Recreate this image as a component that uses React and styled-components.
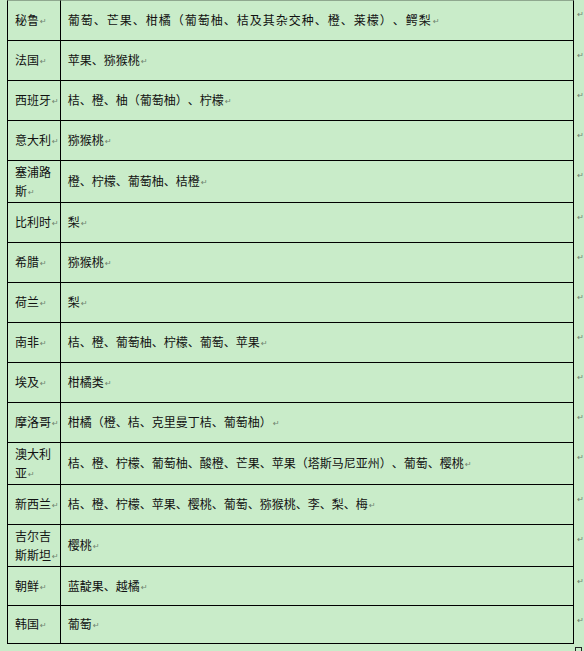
import React from "react";
import styled, { createGlobalStyle } from "styled-components";

const GlobalStyle = createGlobalStyle`
    html, body {
        margin: 0;
        padding: 0;
        background: #c9ecc9;
    }
    body {
        font-family: "Noto Sans CJK SC", "Noto Sans", sans-serif;
        color: #111;
    }
`;

// h = row height incl. bottom border, sp = extra letter spacing
const rows = [
    { country: ["秘鲁"], fruits: "葡萄、芒果、柑橘（葡萄柚、桔及其杂交种、橙、莱檬）、鳄梨", h: 40, sp: 1 },
    { country: ["法国"], fruits: "苹果、猕猴桃", h: 40 },
    { country: ["西班牙"], fruits: "桔、橙、柚（葡萄柚）、柠檬", h: 40 },
    { country: ["意大利"], fruits: "猕猴桃", h: 40 },
    { country: ["塞浦路", "斯"], fruits: "橙、柠檬、葡萄柚、桔橙", h: 42 },
    { country: ["比利时"], fruits: "梨", h: 40 },
    { country: ["希腊"], fruits: "猕猴桃", h: 40 },
    { country: ["荷兰"], fruits: "梨", h: 40 },
    { country: ["南非"], fruits: "桔、橙、葡萄柚、柠檬、葡萄、苹果", h: 40 },
    { country: ["埃及"], fruits: "柑橘类", h: 40 },
    { country: ["摩洛哥"], fruits: "柑橘（橙、桔、克里曼丁桔、葡萄柚）", h: 40 },
    { country: ["澳大利", "亚"], fruits: "桔、橙、柠檬、葡萄柚、酸橙、芒果、苹果（塔斯马尼亚州）、葡萄、樱桃", h: 42 },
    { country: ["新西兰"], fruits: "桔、橙、柠檬、苹果、樱桃、葡萄、猕猴桃、李、梨、梅", h: 40 },
    { country: ["吉尔吉", "斯斯坦"], fruits: "樱桃", h: 42 },
    { country: ["朝鲜"], fruits: "蓝靛果、越橘", h: 39 },
    { country: ["韩国"], fruits: "葡萄", h: 38 },
];

const App = () => {
    return (
        <>
            <GlobalStyle />
            <Page>
                {rows.map((row, i) => (
                    <Row key={i} $h={row.h + (i === 0 ? 1 : 0)}>
                        <CountryCell $first={i === 0}>
                            <CellText>
                                {row.country.map((line, j) => (
                                    <React.Fragment key={j}>
                                        {j > 0 && <br />}
                                        {line}
                                    </React.Fragment>
                                ))}
                                <Mark>↵</Mark>
                            </CellText>
                        </CountryCell>
                        <FruitCell $first={i === 0}>
                            <CellText $sp={row.sp || 0}>
                                {row.fruits}
                                <Mark>↵</Mark>
                            </CellText>
                        </FruitCell>
                        <RowEnd>
                            <Mark>↵</Mark>
                        </RowEnd>
                    </Row>
                ))}
                <ResizeHandle />
            </Page>
        </>
    );
};

const Page = styled.div`
    width: 584px;
    height: 651px;
    overflow: hidden;
    padding-left: 7px;
    box-sizing: border-box;
`;

const Row = styled.div`
    display: flex;
    height: ${(p) => p.$h}px;
`;

const Cell = styled.div`
    box-sizing: border-box;
    display: flex;
    align-items: center;
    border-left: 1px solid #000;
    border-bottom: 1px solid #000;
    border-top: ${(p) => (p.$first ? "1px solid #8fa88f" : "none")};
    padding-left: 7px;
    font-size: 12px;
    line-height: 19px;
    text-spacing-trim: space-all;
`;

const CountryCell = styled(Cell)`
    width: 53px;
    padding-right: 1px;
`;

const FruitCell = styled(Cell)`
    width: 516px;
    border-right: 1px solid #000;
`;

const CellText = styled.div`
    white-space: nowrap;
    letter-spacing: ${(p) => p.$sp || 0}px;
`;

const Mark = styled.span`
    font-family: "DejaVu Sans", sans-serif;
    font-size: 8px;
    color: #6f826f;
    margin-left: 1px;
    vertical-align: 1px;
    letter-spacing: 0;
`;

const RowEnd = styled.div`
    padding-top: 5px;
    padding-left: 2px;
    line-height: 12px;
`;

const ResizeHandle = styled.div`
    margin-left: 568px;
    margin-top: 3px;
    width: 5px;
    height: 6px;
    border: 1px solid #222;
`;

export default App;
